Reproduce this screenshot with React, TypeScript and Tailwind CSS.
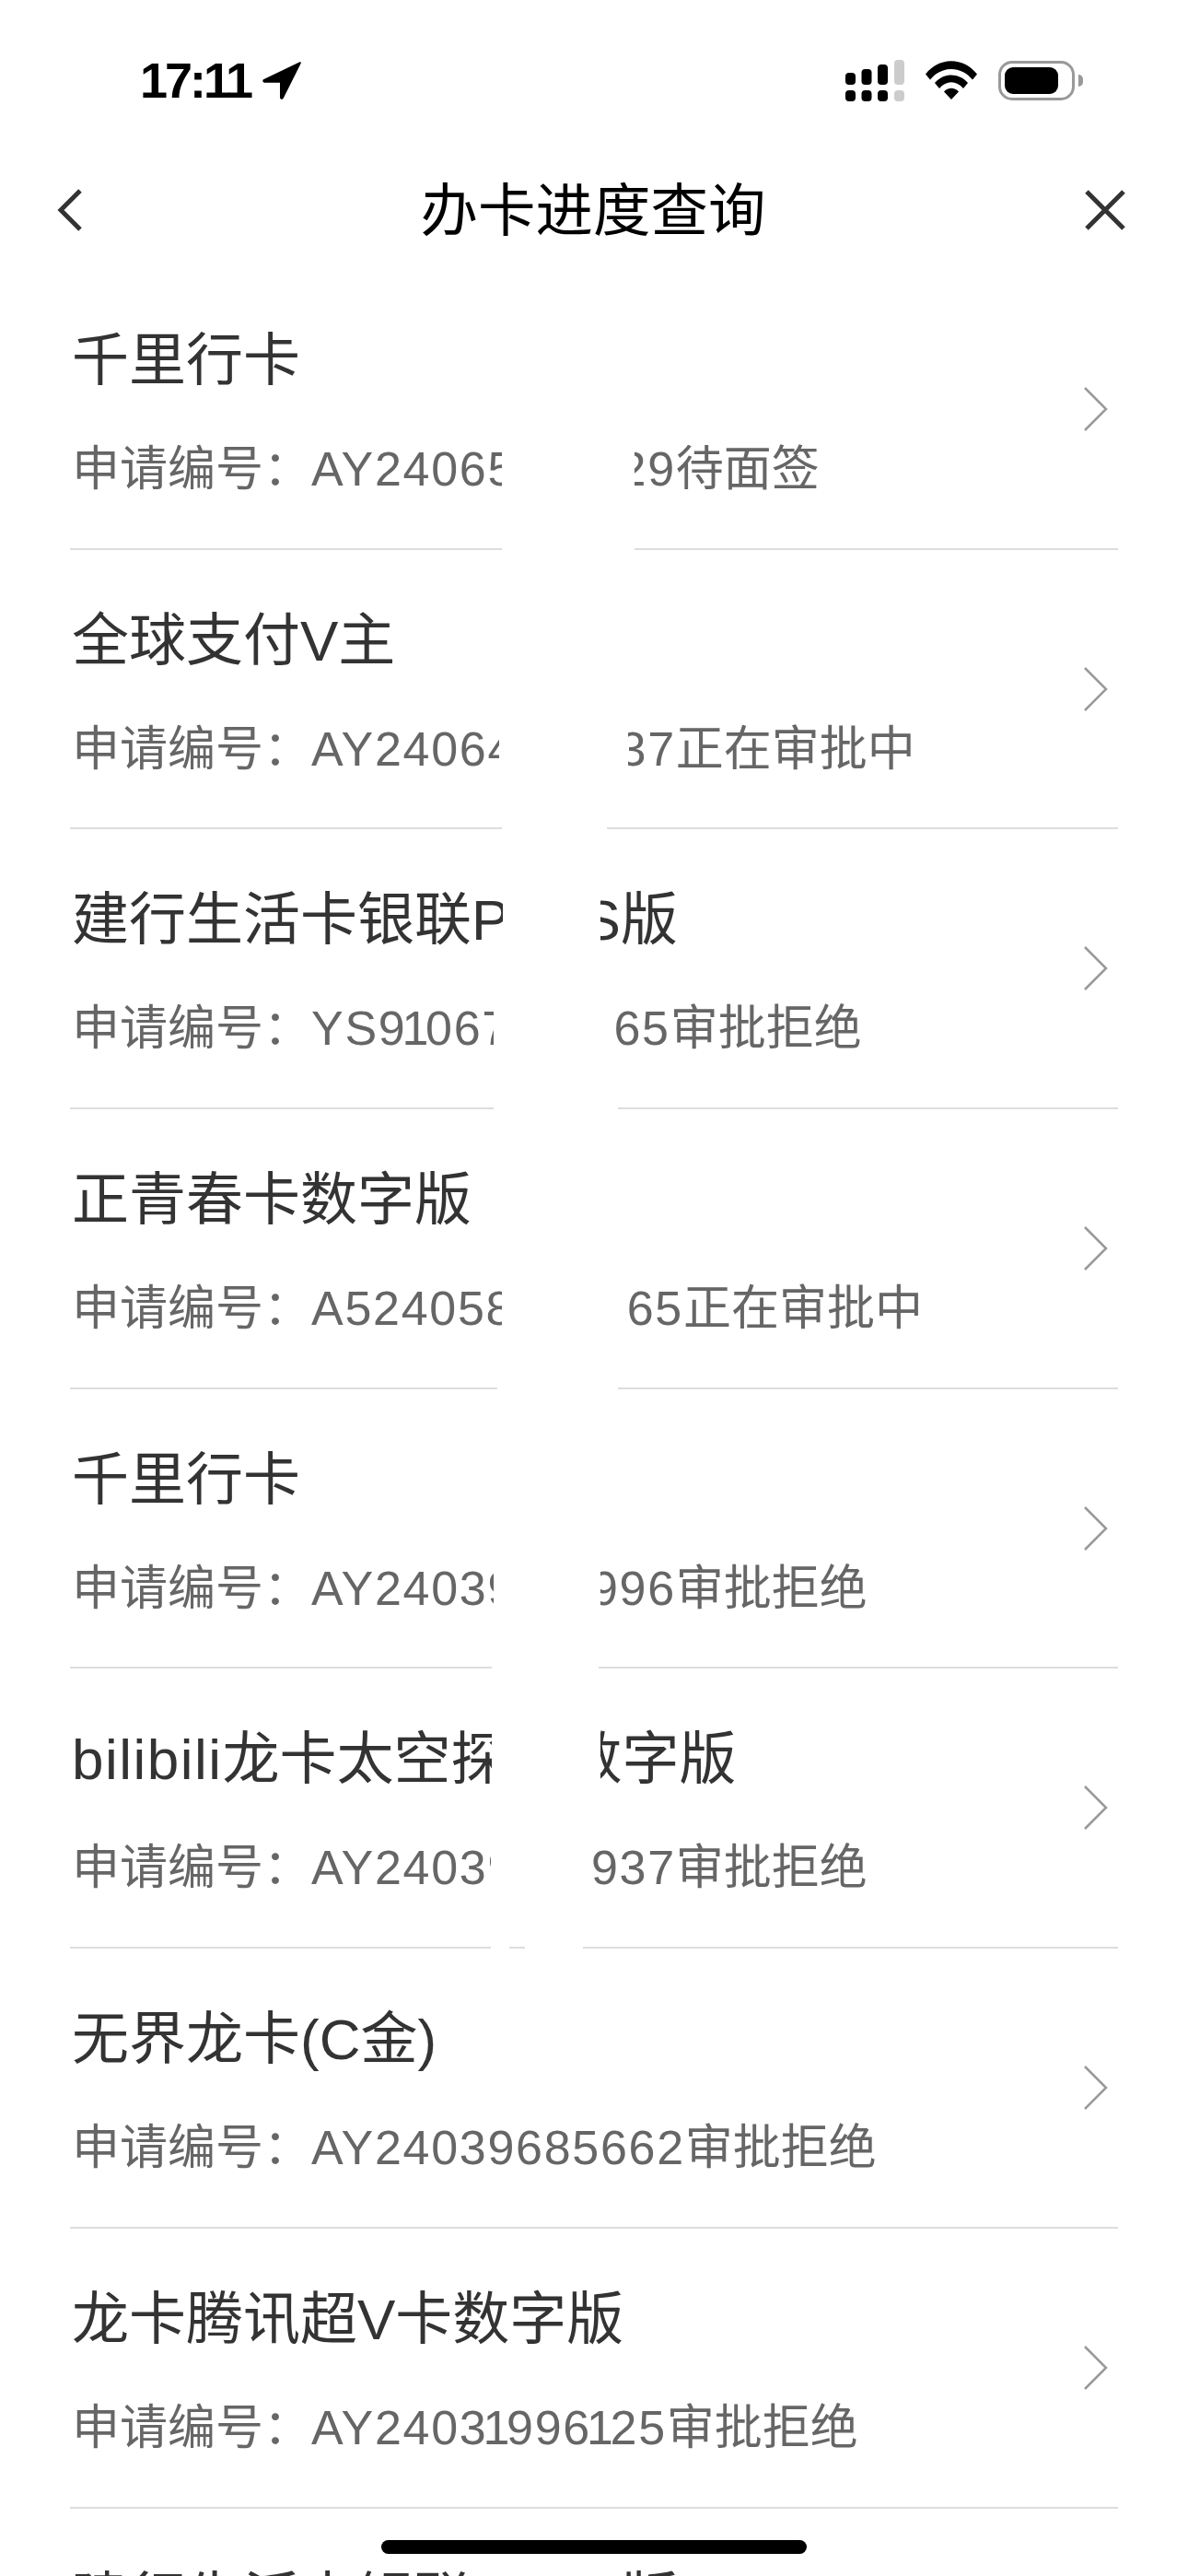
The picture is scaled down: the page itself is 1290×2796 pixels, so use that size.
const rows = [
  { title: "千里行卡", no: "AY24065100029", status: "待面签", sub: [545, 689], sep: [[545, 689]] },
  { title: "全球支付V主", no: "AY24064100037", status: "正在审批中", sub: [542, 682], sep: [[545, 659]] },
  { title: "建行生活卡银联PLUS版", no: "YS91067100065", status: "审批拒绝", head: [546, 652], sub: [536, 667], sep: [[536, 671]] },
  { title: "正青春卡数字版", no: "A524058000065", status: "正在审批中", sub: [545, 678], sep: [[540, 671]] },
  { title: "千里行卡", no: "AY24039100996", status: "审批拒绝", sub: [536, 652], sep: [[534, 650]] },
  { prefix: "bilibili", title: "龙卡太空探索数字版", no: "AY24039100937", status: "审批拒绝", head: [534, 652], sub: [533, 643], sep: [[533, 553], [570, 633]] },
  { title: "无界龙卡(C金)", no: "AY24039685662", status: "审批拒绝" },
  { title: "龙卡腾讯超V卡数字版", no: "AY24031996125", status: "审批拒绝" },
  { title: "建行生活卡银联PLUS版", no: "AY24030000000", status: "审批拒绝" },
];

const Mask = ({ range, className }: { range: number[]; className: string }) => (
  <div
    className={`absolute bg-white ${className}`}
    style={{ left: range[0], width: range[1] - range[0] }}
  />
);

// the reference font has a narrow "1", Liberation's digits are all one width
const CardNo = ({ value }: { value: string }) => (
  <span className="tracking-[1.7px]">
    {value.split("").map((ch, i) =>
      ch === "1" ? (
        <span key={i} className="-mx-[5px]">
          {ch}
        </span>
      ) : (
        ch
      ),
    )}
  </span>
);

const StatusBar = () => (
  <div className="flex h-[174px] items-center justify-between pl-[152px] pr-[114px]">
    <div className="flex items-center gap-[12px]">
      <span className="text-[54px] font-semibold leading-none tracking-[-3px] text-black">17:11</span>
      <svg width="44" height="42" viewBox="0 0 44 42" fill="#000">
        <path d="M41 1.5 2.5 20c-2 1-1.400 3.700.8 3.700H20v16c0 2.200 2.800 2.800 3.800.8L42.700 2.800c.6-1-.6-1.900-1.700-1.300Z" />
      </svg>
    </div>
    <div className="flex items-center">
      <svg width="64" height="45" viewBox="0 0 64 45" fill="#000">
        <rect x="0" y="14" width="11" height="13" rx="4" />
        <rect x="17.500" y="10" width="11" height="17" rx="4" />
        <rect x="35" y="5" width="11" height="22" rx="4" />
        <rect x="53" y="0" width="11" height="27" rx="4" fill="#ccc" />
        <rect x="0" y="33" width="11" height="12" rx="4" />
        <rect x="17.500" y="33" width="11" height="12" rx="4" />
        <rect x="35" y="33" width="11" height="12" rx="4" />
        <rect x="53" y="33" width="11" height="12" rx="4" fill="#ccc" />
      </svg>
      <svg className="ml-[23px]" width="56" height="42" viewBox="0 0 56 42" fill="#000">
        <path d="M0 14.500C15-4.500 41-4.500 56 14.500l-5 6C39 5 17 5 5 20.500Z" />
        <path d="M10 24C19.500 12.500 36.500 12.500 46 24l-5 6C33.500 21 22.500 21 15 30Z" />
        <path d="M20 33.500c4.500-5 11.500-5 16 0L28 42Z" />
      </svg>
      <div className="ml-[23px] flex items-center gap-[4px]">
        <div className="h-[43px] w-[83px] rounded-[15px] border-[3px] border-[#999] p-[4px]">
          <div className="h-full w-[58px] rounded-[9px] bg-black" />
        </div>
        <div className="h-[13px] w-[5px] rounded-r-full bg-[#999]" />
      </div>
    </div>
  </div>
);

const NavBar = () => (
  <div className="flex h-[108px] items-center pl-[62px] pr-[68px]">
    <div className="flex-1">
      <svg width="28" height="46" viewBox="0 0 28 46" fill="none" stroke="#333" strokeWidth="5">
        <path d="M25 2 4 23l21 21" />
      </svg>
    </div>
    <h1 className="pl-[4px] pt-[2px] text-[62.5px] font-normal leading-none text-black">办卡进度查询</h1>
    <div className="flex flex-1 justify-end">
      <svg width="44" height="44" viewBox="0 0 44 44" fill="none" stroke="#333" strokeWidth="5">
        <path d="m2 2 40 40M42 2 2 42" />
      </svg>
    </div>
  </div>
);

export default function App() {
  return (
    <div
      className="relative h-[2796px] w-[1290px] overflow-hidden bg-white"
      style={{ fontFamily: '"Liberation Sans", "Noto Sans CJK SC", sans-serif' }}
    >
      <StatusBar />
      <NavBar />
      <div className="pt-[11px]">
        {rows.map((row, i) => (
          <div key={i} className="relative h-[303.7px]">
            <div className="mx-[76px] flex h-full justify-between border-b-2 border-[#ddd] pr-[11px]">
              <div className="pl-[2px] pt-[59px]">
                <div className="text-[62px] leading-[80px] text-[#333]">
                  {row.prefix && <span className="tracking-[1.5px]">{row.prefix}</span>}
                  {row.title}
                </div>
                <div className="mt-[42px] text-[52px] leading-[70px] text-[#666]">
                  申请编号：<CardNo value={row.no} />
                  {row.status}
                </div>
              </div>
              <svg className="self-center" width="26" height="48" viewBox="0 0 26 48" fill="none" stroke="#999" strokeWidth="2.500">
                <path d="m1 1 23 23L1 47" />
              </svg>
            </div>
            {row.head && <Mask range={row.head} className="top-[50px] h-[100px]" />}
            {row.sub && <Mask range={row.sub} className="top-[170px] h-[90px]" />}
            {row.sep?.map((s, j) => (
              <Mask key={j} range={s} className="bottom-0 h-[3px]" />
            ))}
          </div>
        ))}
      </div>
      <div className="absolute bottom-[24px] left-[414px] h-[15px] w-[462px] rounded-full bg-black" />
    </div>
  );
}
